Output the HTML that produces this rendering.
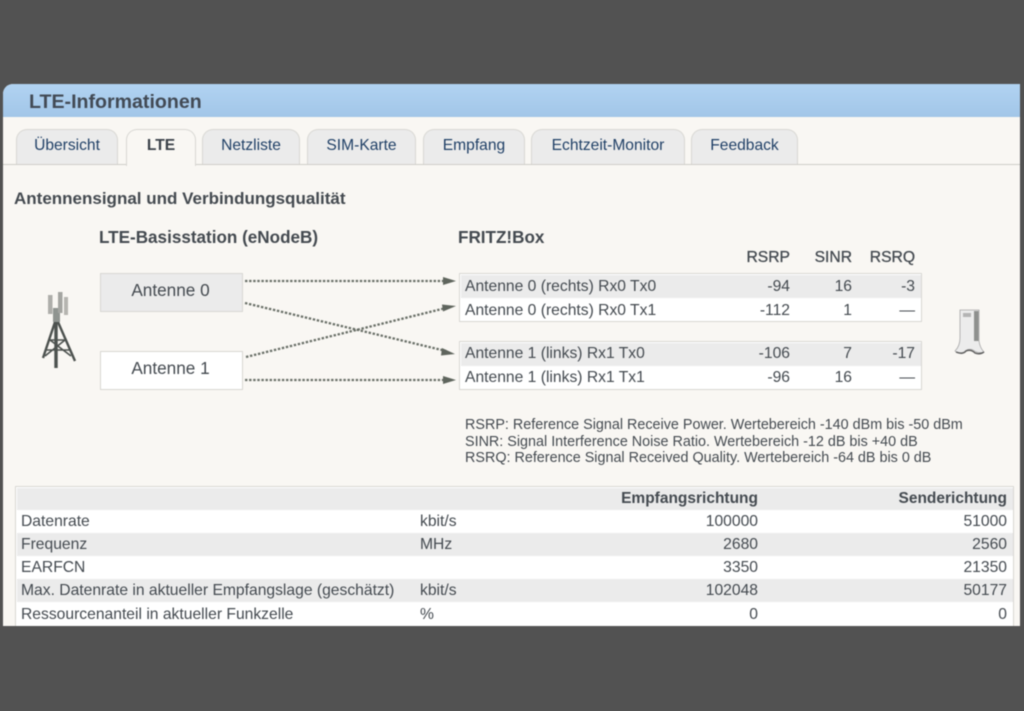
<!DOCTYPE html>
<html><head><meta charset="utf-8"><style>
html,body{margin:0;padding:0;width:1024px;height:711px;overflow:hidden;background:#525252;font-family:"Liberation Sans",sans-serif;color:#444a50}
#w{position:absolute;left:0;top:0;width:1024px;height:711px;background:#525252;filter:blur(.45px);overflow:hidden}
.a{position:absolute;white-space:nowrap}
#p{position:absolute;left:3px;top:84px;width:1017px;height:542px;background:#f9f7f3;overflow:hidden;border-top-left-radius:10px}
#bar{position:absolute;left:0;top:0;width:1017px;height:33px;background:linear-gradient(#b1d3f2,#a2c6e8)}
.tab{position:absolute;top:129px;height:35px;box-sizing:border-box;border:1.500px solid #d8d7d3;border-bottom:0;border-radius:11px 11px 0 0;background:#ebebeb;color:#1f3f66;font-size:15.600px;text-align:center;line-height:31px}
.tab.on{background:#f9f7f3;height:37px;color:#3a4048;font-weight:bold;z-index:2}
.t{font-size:15.670px}
.b{font-weight:bold;font-size:15.500px}
.r{text-align:right}
.row{position:absolute;background:#ebebeb}
.box{position:absolute;box-sizing:border-box;border:1.500px solid #d8d7d3;background:#fff}
</style></head><body><div id="w">
<div id="p"><div id="bar"></div></div>
<div class="a" style="left:29px;top:90px;font-size:19.600px;font-weight:bold;color:#424a55;line-height:24px">LTE-Informationen</div>
<div class="a" style="left:3px;top:164px;width:1017px;height:1px;background:#cfcec9"></div>
<div class="tab" style="left:16px;width:102px">Übersicht</div>
<div class="tab on" style="left:126px;width:70px">LTE</div>
<div class="tab" style="left:202px;width:98px">Netzliste</div>
<div class="tab" style="left:307px;width:109px">SIM-Karte</div>
<div class="tab" style="left:423px;width:102px">Empfang</div>
<div class="tab" style="left:531px;width:154px">Echtzeit-Monitor</div>
<div class="tab" style="left:691px;width:107px">Feedback</div>

<div class="a" style="left:14px;top:189px;font-size:17px;font-weight:bold;line-height:19px">Antennensignal und Verbindungsqualität</div>
<div class="a" style="left:99px;top:228px;font-size:17.100px;font-weight:bold;line-height:19px">LTE-Basisstation (eNodeB)</div>
<div class="a" style="left:458px;top:228px;font-size:17.100px;font-weight:bold;line-height:19px">FRITZ!Box</div>
<div class="a t r" style="left:710px;width:80px;top:249px;-webkit-text-stroke:.3px #444a50;line-height:18px">RSRP</div>
<div class="a t r" style="left:790px;width:62px;top:249px;-webkit-text-stroke:.3px #444a50;line-height:18px">SINR</div>
<div class="a t r" style="left:852px;width:63px;top:249px;-webkit-text-stroke:.3px #444a50;line-height:18px">RSRQ</div>

<div class="box" style="left:100px;top:273px;width:143px;height:39px;background:#ebebeb;font-size:17.200px;text-align:center;line-height:33px;padding-right:2px">Antenne 0</div>
<div class="box" style="left:100px;top:351px;width:143px;height:39px;font-size:17.200px;text-align:center;line-height:33px;padding-right:2px">Antenne 1</div>

<div class="box" style="left:459px;top:273px;width:463px;height:49px"></div>
<div class="row" style="left:460.500px;top:275px;width:460px;height:23px"></div>
<div class="box" style="left:459px;top:341px;width:463px;height:49px"></div>
<div class="row" style="left:460.500px;top:343px;width:460px;height:23px"></div>

<div class="a t" style="left:465px;top:278px;line-height:18px">Antenne 0 (rechts) Rx0 Tx0</div>
<div class="a t r" style="left:710px;width:80px;top:278px;line-height:18px">-94</div>
<div class="a t r" style="left:790px;width:62px;top:278px;line-height:18px">16</div>
<div class="a t r" style="left:852px;width:63px;top:278px;line-height:18px">-3</div>
<div class="a t" style="left:465px;top:302px;line-height:18px">Antenne 0 (rechts) Rx0 Tx1</div>
<div class="a t r" style="left:710px;width:80px;top:302px;line-height:18px">-112</div>
<div class="a t r" style="left:790px;width:62px;top:302px;line-height:18px">1</div>
<div class="a t r" style="left:852px;width:63px;top:302px;line-height:18px">—</div>
<div class="a t" style="left:465px;top:345px;line-height:18px">Antenne 1 (links) Rx1 Tx0</div>
<div class="a t r" style="left:710px;width:80px;top:345px;line-height:18px">-106</div>
<div class="a t r" style="left:790px;width:62px;top:345px;line-height:18px">7</div>
<div class="a t r" style="left:852px;width:63px;top:345px;line-height:18px">-17</div>
<div class="a t" style="left:465px;top:369px;line-height:18px">Antenne 1 (links) Rx1 Tx1</div>
<div class="a t r" style="left:710px;width:80px;top:369px;line-height:18px">-96</div>
<div class="a t r" style="left:790px;width:62px;top:369px;line-height:18px">16</div>
<div class="a t r" style="left:852px;width:63px;top:369px;line-height:18px">—</div>

<svg class="a" style="left:0;top:0" width="1024" height="711" viewBox="0 0 1024 711" fill="none">
<g stroke="#6a7068" stroke-width="2.300" stroke-dasharray="2.400 1.700">
<path d="M245 281H446"/><path d="M245 303L446 351"/><path d="M246 357L446 308"/><path d="M245 380H446"/>
</g>
<g fill="#5f655d">
<path d="M443 277L456 281L443 285Z"/>
<path d="M442 348L455 354L441 355.500Z"/>
<path d="M442 304.500L456 306L443 311.500Z"/>
<path d="M443 376L456 380L443 384Z"/>
</g>
<g stroke="#4d524f" fill="none">
<path d="M55 322L43 358M58 322L75 361" stroke-width="2.400"/>
<path d="M56 320V368" stroke-width="3.400"/>
<path d="M49 340H67M46 350H71M50 340L71 356M65 340L45 356" stroke-width="1.600"/>
</g>
<rect x="53" y="308" width="7" height="14" fill="#8f9490"/>
<rect x="48" y="295" width="4.500" height="19" fill="#aeaeaa"/>
<rect x="58" y="292" width="4.500" height="21" fill="#a4a5a1"/>
<rect x="64" y="297" width="4" height="18" fill="#b5b5b0"/>
<path d="M960 310H979V341Q980 348 984 352Q978 354 973 350Q968 348 964 352Q958 354 955 351Q960 346 960 338Z" fill="#ececec" stroke="#a6a6a6" stroke-width=".8"/>
<rect x="974" y="311" width="4.500" height="30" fill="#8e908e"/>
<path d="M963 313h8v4h-8z" fill="#b4b4b4"/>
<path d="M956 352Q963 355 966 351Q971 349 975 353Q980 355 984 352" stroke="#5a5a5a" stroke-width="1.400"/>
</svg>

<div class="a" style="left:465px;top:417px;font-size:14.370px;line-height:16.500px">RSRP: Reference Signal Receive Power. Wertebereich -140 dBm bis -50 dBm<br>SINR: Signal Interference Noise Ratio. Wertebereich -12 dB bis +40 dB<br>RSRQ: Reference Signal Received Quality. Wertebereich -64 dB bis 0 dB</div>

<div class="a" style="left:15px;top:486px;width:999px;height:140px;box-sizing:border-box;border:1.500px solid #d8d7d3;border-bottom:0;background:#fff"></div>
<div class="row" style="left:16.500px;top:488px;width:996px;height:22px"></div>
<div class="row" style="left:16.500px;top:533px;width:996px;height:23px"></div>
<div class="row" style="left:16.500px;top:579px;width:996px;height:23px"></div>

<div class="a b r" style="left:500px;width:258px;top:490px;line-height:18px">Empfangsrichtung</div>
<div class="a b r" style="left:800px;width:207px;top:490px;line-height:18px">Senderichtung</div>

<div class="a t" style="left:21px;top:512px;line-height:19px">Datenrate</div>
<div class="a t" style="left:420px;top:512px;line-height:19px">kbit/s</div>
<div class="a t r" style="left:500px;width:258px;top:512px;line-height:19px">100000</div>
<div class="a t r" style="left:800px;width:207px;top:512px;line-height:19px">51000</div>

<div class="a t" style="left:21px;top:535px;line-height:19px">Frequenz</div>
<div class="a t" style="left:420px;top:535px;line-height:19px">MHz</div>
<div class="a t r" style="left:500px;width:258px;top:535px;line-height:19px">2680</div>
<div class="a t r" style="left:800px;width:207px;top:535px;line-height:19px">2560</div>

<div class="a t" style="left:21px;top:558px;line-height:19px">EARFCN</div>
<div class="a t r" style="left:500px;width:258px;top:558px;line-height:19px">3350</div>
<div class="a t r" style="left:800px;width:207px;top:558px;line-height:19px">21350</div>

<div class="a t" style="left:21px;top:581px;line-height:19px">Max. Datenrate in aktueller Empfangslage (geschätzt)</div>
<div class="a t" style="left:420px;top:581px;line-height:19px">kbit/s</div>
<div class="a t r" style="left:500px;width:258px;top:581px;line-height:19px">102048</div>
<div class="a t r" style="left:800px;width:207px;top:581px;line-height:19px">50177</div>

<div class="a t" style="left:21px;top:605px;line-height:19px">Ressourcenanteil in aktueller Funkzelle</div>
<div class="a t" style="left:420px;top:605px;line-height:19px">%</div>
<div class="a t r" style="left:500px;width:258px;top:605px;line-height:19px">0</div>
<div class="a t r" style="left:800px;width:207px;top:605px;line-height:19px">0</div>
</div></body></html>
